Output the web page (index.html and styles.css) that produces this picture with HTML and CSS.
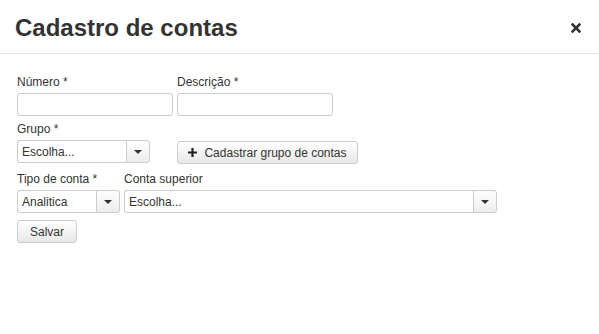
FILE: index.html
```html
<!DOCTYPE html>
<html lang="pt-BR">
<head>
  <meta charset="UTF-8">
  <title>Cadastro de contas</title>
  <link rel="stylesheet" href="styles.css">
</head>
<body>
  <div class="modal">
    <div class="modal-header">
      <h1>Cadastro de contas</h1>
      <button class="close" type="button" aria-label="Fechar">
        <svg width="10" height="10" viewBox="0 0 10 10"><path d="M1.5 1.5 L8.5 8.5 M8.5 1.5 L1.5 8.5" stroke="#333" stroke-width="2.6" stroke-linecap="square"/></svg>
      </button>
    </div>

    <form class="modal-body">
      <!-- numero / descricao -->
      <div class="row">
        <div class="field">
          <label>Número *</label>
          <input type="text" class="input w-156">
        </div>
        <div class="field">
          <label>Descrição *</label>
          <input type="text" class="input w-156">
        </div>
      </div>

      <!-- grupo -->
      <div class="row row-grupo">
        <div class="field">
          <label>Grupo *</label>
          <div class="combo w-133">
            <span class="combo-text">Escolha...</span>
            <span class="combo-btn"><span class="caret"></span></span>
          </div>
        </div>
        <button type="button" class="btn btn-add">
          <svg width="9" height="9" viewBox="0 0 9 9"><path d="M4.5 0 V9 M0 4.5 H9" stroke="#222" stroke-width="2.2"/></svg>
          Cadastrar grupo de contas
        </button>
      </div>

      <!-- tipo / conta superior -->
      <div class="row row-tipo">
        <div class="field">
          <label>Tipo de conta *</label>
          <div class="combo w-103">
            <span class="combo-text">Analitica</span>
            <span class="combo-btn"><span class="caret"></span></span>
          </div>
        </div>
        <div class="field">
          <label>Conta superior</label>
          <div class="combo w-373">
            <span class="combo-text">Escolha...</span>
            <span class="combo-btn"><span class="caret"></span></span>
          </div>
        </div>
      </div>

      <button type="button" class="btn btn-save">Salvar</button>
    </form>
  </div>
</body>
</html>
```

FILE: styles.css
```css
body {
  margin: 0;
  background: #fff;
  font-family: "Liberation Sans", Arial, sans-serif;
  font-size: 12px;
  color: #333;
}

.modal {
  width: 599px;
  height: 334px;
  background: #fff;
}

.modal-header {
  display: flex;
  align-items: center;
  justify-content: space-between;
  height: 54px;
  padding: 0 18px 0 15px;
  border-bottom: 1px solid #e5e5e5;
  box-sizing: border-box;
}

.modal-header h1 {
  margin: 0;
  font-size: 24px;
  font-weight: bold;
  color: #333;
  padding-top: 2px;
}

.close {
  border: none;
  background: none;
  padding: 0;
  width: 10px;
  height: 10px;
  margin-top: 2px;
  cursor: pointer;
}

.close svg {
  display: block;
}

.modal-body {
  padding: 20px 17px 0;
}

.row {
  display: flex;
  align-items: flex-end;
  gap: 4px;
}

.row-grupo {
  margin-top: 5px;
}

.row-tipo {
  margin-top: 8px;
}

.field {
  display: flex;
  flex-direction: column;
}

label {
  line-height: 17px;
  margin-bottom: 2px;
  color: #333;
}

.input {
  height: 23px;
  box-sizing: border-box;
  border: 1px solid #ccc;
  border-radius: 3px;
  padding: 2px 5px;
  font: inherit;
  background: #fff;
}

.w-156 { width: 156px; }
.w-133 { width: 133px; }
.w-103 { width: 103px; }
.w-373 { width: 373px; }

.combo {
  display: flex;
  height: 23px;
  box-sizing: border-box;
}

.combo-text {
  flex: 1;
  display: flex;
  align-items: center;
  padding-left: 4px;
  border: 1px solid #ccc;
  border-right: none;
  border-radius: 3px 0 0 3px;
  background: #fff;
  color: #333;
}

.combo-btn {
  width: 24px;
  display: flex;
  align-items: center;
  justify-content: center;
  border: 1px solid #ccc;
  border-radius: 0 3px 3px 0;
  background: linear-gradient(#fff, #ececec);
  box-sizing: border-box;
}

.caret {
  width: 0;
  height: 0;
  border-left: 4px solid transparent;
  border-right: 4px solid transparent;
  border-top: 4px solid #333;
}

.btn {
  display: inline-flex;
  align-items: center;
  justify-content: center;
  gap: 7px;
  height: 23px;
  box-sizing: border-box;
  border: 1px solid #ccc;
  border-radius: 3px;
  background: linear-gradient(#fff, #e8e8e8);
  font: inherit;
  color: #333;
  padding: 0 10px;
  cursor: pointer;
}

.btn-add {
  width: 181px;
  margin-left: 23px;
  margin-bottom: -1px;
}

.btn-save {
  width: 60px;
  margin-top: 7px;
}
```
